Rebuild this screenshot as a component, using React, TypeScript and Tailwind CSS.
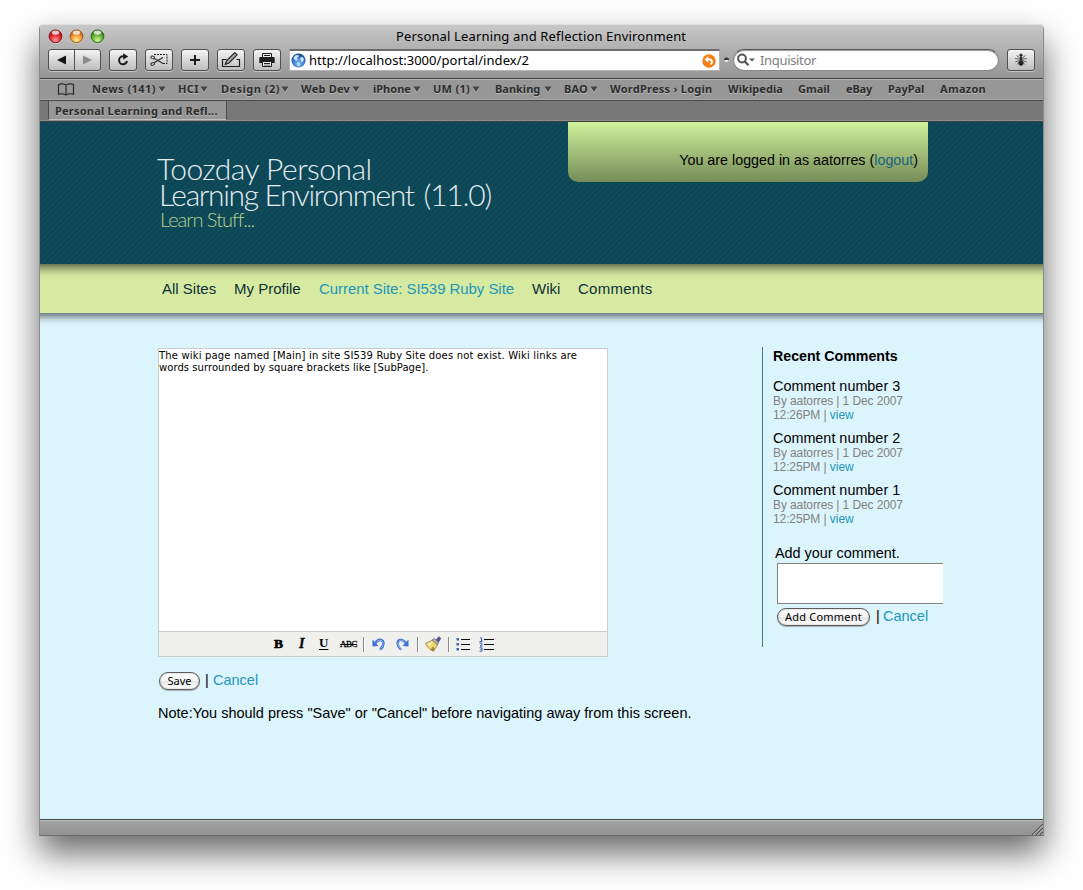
import type { ReactNode } from "react";

const bookmarks = [
  { label: "News (141)", menu: true, cell: "w-[86px]", text: "w-[66px] tracking-[0.46px]" },
  { label: "HCI", menu: true, cell: "w-[43px]", text: "w-[22px] tracking-[0.41px]" },
  { label: "Design (2)", menu: true, cell: "w-[80px]", text: "w-[60px] tracking-[0.48px]" },
  { label: "Web Dev", menu: true, cell: "w-[72px]", text: "w-[51px] tracking-[0.22px]" },
  { label: "iPhone", menu: true, cell: "w-[60px]", text: "w-[40px]" },
  { label: "UM (1)", menu: true, cell: "w-[62px]", text: "w-[39px] tracking-[0.28px]" },
  { label: "Banking", menu: true, cell: "w-[69px]", text: "w-[49px]" },
  { label: "BAO", menu: true, cell: "w-[46px]", text: "w-[26px] tracking-[0.19px]" },
  { label: "WordPress › Login", menu: false, cell: "w-[118px]", text: "tracking-[0.25px]" },
  { label: "Wikipedia", menu: false, cell: "w-[70px]", text: "tracking-[0.07px]" },
  { label: "Gmail", menu: false, cell: "w-[48px]", text: "" },
  { label: "eBay", menu: false, cell: "w-[42px]", text: "tracking-[-0.19px]" },
  { label: "PayPal", menu: false, cell: "w-[52px]", text: "" },
  { label: "Amazon", menu: false, cell: "w-[50px]", text: "tracking-[0.27px]" },
];

const comments = [
  { title: "Comment number 3", time: "12:26PM" },
  { title: "Comment number 2", time: "12:25PM" },
  { title: "Comment number 1", time: "12:25PM" },
];

function Light({ id, edge, mid, glow }: { id: string; edge: string; mid: string; glow: string }) {
  return (
    <svg width="15" height="15" viewBox="0 0 15 15">
      <defs>
        <radialGradient id={id} cx="0.5" cy="0.8" r="0.75">
          <stop offset="0" stopColor={glow} />
          <stop offset="0.5" stopColor={mid} />
          <stop offset="1" stopColor={edge} />
        </radialGradient>
      </defs>
      <circle cx="7.5" cy="8" r="6.9" fill="#d8d8d8" opacity="0.7" />
      <circle cx="7.5" cy="7.3" r="6.4" fill={"url(#" + id + ")"} stroke={edge} strokeWidth="1" />
      <ellipse cx="7.5" cy="3.6" rx="3.7" ry="2.2" fill="#fff" opacity="0.75" />
    </svg>
  );
}

function ToolButton({ children, className = "" }: { children: ReactNode; className?: string }) {
  return (
    <button
      className={
        "flex h-[22px] w-7 items-center justify-center rounded-[3px] border border-[#505050] bg-linear-to-b from-[#f4f4f4] to-[#bdbdbd] shadow-[0_1px_0_#c4c4c4] " +
        className
      }
    >
      {children}
    </button>
  );
}

function Triangle() {
  return (
    <svg className="mt-[2px]" width="8" height="7" viewBox="0 0 8 7">
      <path d="M0.5 1.5h7L4 7z" fill="#c0c0c0" />
      <path d="M0.5 0.5h7L4 6z" fill="#444" />
    </svg>
  );
}

function TitleBar() {
  return (
    <div className="h-[54px] rounded-t-[4px] border-t border-[#dedede] bg-linear-to-b from-[#c8c8c8] to-[#959595]">
      <div className="flex h-6 items-start pl-2">
        <div className="flex w-[348px] gap-[6px] pt-1">
          <Light id="lightRed" edge="#8e1018" mid="#e8303a" glow="#ff9a9a" />
          <Light id="lightAmber" edge="#a5571a" mid="#f5a03c" glow="#ffef9a" />
          <Light id="lightGreen" edge="#2f6b1c" mid="#6fb840" glow="#d6f79a" />
        </div>
        <div className="text-[13px] leading-[22px] tracking-[0.15px]">Personal Learning and Reflection Environment</div>
      </div>
      <div className="flex items-start pl-2">
        <div className="mr-2 flex h-[22px] w-[53px] rounded-[3px] border border-[#505050] bg-linear-to-b from-[#f4f4f4] to-[#bdbdbd] shadow-[0_1px_0_#c4c4c4]">
          <button className="flex w-[26px] items-center justify-center border-r border-[#505050]">
            <svg width="9" height="10" viewBox="0 0 9 10"><path d="M0 5L9 0.5v9z" fill="#151515" /></svg>
          </button>
          <button className="flex flex-1 items-center justify-center">
            <svg width="9" height="10" viewBox="0 0 9 10"><path d="M9 5L0 0.5v9z" fill="#8c8c8c" /></svg>
          </button>
        </div>
        <ToolButton className="mr-2">
          <svg width="14" height="14" viewBox="0 0 14 14">
            <path d="M8.2 3.3H7A4 4 0 1 0 11 8" fill="none" stroke="#1c1c1c" strokeWidth="2" />
            <path d="M7.2 0.2L12.2 3.4L7.2 6.8z" fill="#1c1c1c" />
          </svg>
        </ToolButton>
        <ToolButton className="mr-2">
          <svg width="18" height="14" viewBox="0 0 18 14" fill="none" stroke="#1f1f1f">
            <path d="M4 1.500h13v9h-4" strokeDasharray="2 1" />
            <path d="M4 5.200l9 5.300M4 9.800l9-5.300" strokeWidth="1.300" stroke="#333" />
            <ellipse cx="2.700" cy="4.400" rx="1.900" ry="1.300" transform="rotate(25 2.700 4.400)" stroke="#333" />
            <ellipse cx="2.700" cy="10.900" rx="1.900" ry="1.300" transform="rotate(-25 2.700 10.900)" stroke="#333" />
          </svg>
        </ToolButton>
        <ToolButton className="mr-2">
          <svg width="12" height="12" viewBox="0 0 12 12"><path d="M5 1h2v4h4v2H7v4H5V7H1V5h4z" fill="#1c1c1c" /></svg>
        </ToolButton>
        <ToolButton className="mr-2">
          <svg width="20" height="16" viewBox="0 0 20 16">
            <path d="M5.500 7.500h-4v7h17v-7h-3" fill="none" stroke="#1f1f1f" strokeWidth="1.200" />
            <path d="M13.700 0.600l2.400 2.200-8.200 8.200-3.600 1.400 1.200-3.600z" fill="#aaa" stroke="#1f1f1f" strokeWidth="1.100" />
            <path d="M4.100 12.600l0.600-2 1.500 1.400z" fill="#1f1f1f" />
          </svg>
        </ToolButton>
        <ToolButton className="mr-2">
          <svg width="16" height="16" viewBox="0 0 16 16">
            <path d="M3.500 5V1.500h9V5" fill="#eee" stroke="#1f1f1f" />
            <rect x="5" y="3" width="6" height="1" fill="#1f1f1f" />
            <path d="M1.500 5h13a1.200 1.200 0 0 1 1.200 1.200V11H0.300V6.200A1.200 1.200 0 0 1 1.500 5z" fill="#1f1f1f" />
            <path d="M3.500 9.500h9v5h-9z" fill="#eee" stroke="#1f1f1f" />
            <rect x="5" y="11" width="6" height="1" fill="#1f1f1f" />
            <rect x="5" y="12.700" width="6" height="0.800" fill="#555" />
          </svg>
        </ToolButton>
        <div className="flex h-[22px] w-[431px] items-center border border-t-2 border-[#b5b5b5] border-t-[#6d6d6d] bg-white pl-[1px] pr-[3px]">
          <svg width="15" height="15" viewBox="0 0 15 15">
            <defs>
              <radialGradient id="globe" cx="0.5" cy="0.7" r="0.7">
                <stop offset="0" stopColor="#8cc6f5" />
                <stop offset="0.5" stopColor="#3d83d6" />
                <stop offset="1" stopColor="#123f86" />
              </radialGradient>
            </defs>
            <circle cx="7.500" cy="7.500" r="7" fill="url(#globe)" />
            <path d="M2.500 4.200l2.500-2.200 3 0.300-0.500 1.700-1.800 1 1.200 1.300-1.500 1.500-2.200-1.200zM9 5l2.500-1.200 1.500 2.200-1 2.500-1.200 1-1-2.200zM6.500 9.500l2.500 1-0.700 2.800-2-1z" fill="#d9eefc" opacity="0.9" />
          </svg>
          <span className="ml-[3px] flex-1 text-[13px] leading-[19px] tracking-[0.04px]">http://localhost:3000/portal/index/2</span>
          <svg width="14" height="14" viewBox="0 0 14 14">
            <circle cx="7" cy="7" r="6.700" fill="#f77f14" />
            <path d="M5 5.500h2.500a2.300 2.300 0 0 1 1.300 4.300" fill="none" stroke="#fff" strokeWidth="1.900" strokeLinecap="round" />
            <path d="M6.300 2.200v6.600L2.500 5.500z" fill="#fff" />
          </svg>
        </div>
        <div className="flex h-[22px] w-[13px] items-center justify-center">
          <svg width="5" height="6" viewBox="0 0 5 6">
            <path d="M0 3a2.500 2.500 0 0 1 5 0z" fill="#333" />
            <path d="M0.500 3h4a2 2 0 0 1-4 0z" fill="#eee" />
          </svg>
        </div>
        <div className="mr-2 flex h-[22px] w-[266px] items-center rounded-full border border-[#8a8a8a] border-t-[#555] bg-white pl-[3px] shadow-[inset_0_1px_1px_#999]">
          <svg width="19" height="14" viewBox="0 0 19 14">
            <circle cx="5" cy="5.500" r="3.900" fill="none" stroke="#555" strokeWidth="2" />
            <path d="M7.800 8.500l3.700 3.700" stroke="#555" strokeWidth="2.300" />
            <path d="M12 5.500h6l-3 3z" fill="#555" />
          </svg>
          <span className="ml-[4px] text-[13px] leading-[19px] tracking-[-0.33px] text-[#808080]">Inquisitor</span>
        </div>
        <ToolButton>
          <svg width="14" height="14" viewBox="0 0 14 14" fill="#222" stroke="#333" strokeWidth="0.700">
            <path d="M7 6L2.500 2.500M7 6.300L1 5.500M7 6.800L1.300 9M7 7.500L3 11.500M7 6l4.500-3.500M7 6.300l6-0.800M7 6.800l5.700 2.200M7 7.500l4 4" fill="none" />
            <circle cx="7" cy="2.200" r="1.300" />
            <ellipse cx="7" cy="5.500" rx="1.200" ry="1.700" stroke="none" />
            <ellipse cx="7" cy="10" rx="2.300" ry="2.500" />
          </svg>
        </ToolButton>
      </div>
    </div>
  );
}

function BookmarksBar() {
  return (
    <div className="flex h-[23px] items-start border-y border-b-[#484848] border-t-[#404040] bg-[#979797] pl-[17px] shadow-[inset_0_1px_0_#b4b4b4,inset_0_-1px_0_#a8a8a8]">
      <svg className="mr-[17px] mt-1" width="18" height="13" viewBox="0 0 18 13" fill="none" stroke="#2c2c2c" strokeWidth="1.200">
        <path d="M9 2.200C7.500 0.600 3.500 0.600 1.500 1.500v9.800c2-0.800 6-0.800 7.500 0.700 1.500-1.500 5.500-1.500 7.500-0.700V1.500C14.500 0.600 10.500 0.600 9 2.200zM9 2.200V12" />
      </svg>
      {bookmarks.map((b) => (
        <div key={b.label} className={"flex items-center " + b.cell}>
          <span className={"shrink-0 whitespace-nowrap text-[11px] font-bold leading-[19px] text-[#2c2c2c] [text-shadow:0_1px_0_#b8b8b8] " + b.text}>
            {b.label}
          </span>
          {b.menu && <Triangle />}
        </div>
      ))}
    </div>
  );
}

function TabBar() {
  return (
    <div className="flex h-[21px] items-start border-b border-[#3c3c3c] bg-[#787878] pl-2 shadow-[inset_0_-1px_0_#8f8f8f]">
      <div className="h-[19px] w-[179px] rounded-b-[2px] border border-t-0 border-[#4c4c4c] border-b-[#c0c0c0] bg-[#979797] pl-[6px] text-[11px] font-bold leading-5 tracking-[0.22px] text-[#2c2c2c] [text-shadow:0_1px_0_#b8b8b8]">
        Personal Learning and Refl...
      </div>
    </div>
  );
}

function SiteHeader() {
  return (
    <header className="flex h-[142px] bg-[#0d4859] bg-[repeating-linear-gradient(135deg,#0c4758_0px,#0c4758_2.800px,#184f5b_3.500px,#0c4758_4.243px)] pl-[118px]">
      <div className="w-[410px] pt-[34px]">
        <h1 className="font-['Lato',sans-serif] text-[30px] font-light leading-[25.500px] text-[#e3edf0]">
          <span className="-ml-px block h-[25.500px] tracking-[-0.500px]">Toozday Personal</span>
          <span className="block h-[25.500px] pl-[1px] tracking-[-1.360px]">
            Learning Environment
            <span className="ml-[10px] tracking-[-1.200px]">(11.0)</span>
          </span>
        </h1>
        <p className="pl-[2px] font-['Lato',sans-serif] text-[20px] font-light leading-6 tracking-[-0.980px] text-[#b9d08c]">Learn Stuff...</p>
      </div>
      <div className="h-[60px] w-[360px] rounded-b-[10px] bg-linear-to-b from-[#d2f39c] to-[#758c58] pr-[10px] pt-[28px] text-right font-['Liberation_Sans',sans-serif] text-[14.300px] leading-5">
        You are logged in as aatorres (<a className="text-[#1c617f]">logout</a>)
      </div>
    </header>
  );
}

function SiteNav() {
  return (
    <nav className="flex h-[49px] bg-[#d6eba1] bg-[linear-gradient(to_bottom,#6b7652_0px,#98a776_4px,#bdcf90_8px,#d0e49d_12px,#d6eba1_16px)] pl-[122px] pt-[15px] font-['Liberation_Sans',sans-serif] text-[15px] leading-5 text-[#0f303b]">
      <a className="w-[72px]">All Sites</a>
      <a className="w-[85px]">My Profile</a>
      <a className="w-[213px] tracking-[-0.060px] text-[#2396bb]">Current Site: SI539 Ruby Site</a>
      <a className="w-[46px]">Wiki</a>
      <a className="tracking-[0.250px]">Comments</a>
    </nav>
  );
}

function AquaButton({ children, className }: { children: ReactNode; className: string }) {
  return (
    <button
      className={
        "h-[18px] whitespace-nowrap rounded-full border border-[#5c5c5c] bg-[linear-gradient(to_bottom,#ffffff_0%,#f6f6f6_48%,#e8e8e8_52%,#ffffff_100%)] text-center font-['Noto_Sans',sans-serif] text-[11px] leading-4 shadow-[inset_0_0_2px_#aaa,0_1px_1px_#9fb0b6] " +
        className
      }
    >
      {children}
    </button>
  );
}

function Separator({ className }: { className: string }) {
  return <div className={"h-[15px] w-[2px] border-l border-[#888] bg-white " + className} />;
}

function EditorToolbar() {
  return (
    <div className="flex h-[25px] items-center border-t border-[#ccc] bg-[#f0f0ee] pl-[114px]">
      <span className="w-[24px] pl-[1px] font-['Liberation_Serif',serif] text-[13.500px] font-bold leading-6 [-webkit-text-stroke:0.600px_#000]">B</span>
      <span className="w-[22px] pl-[2px] font-['Liberation_Serif',serif] text-[14px] font-bold italic leading-6 [-webkit-text-stroke:0.300px_#000]">I</span>
      <span className="-mt-[2px] w-[21px] font-['Liberation_Serif',serif] text-[13px] font-bold leading-6 underline decoration-1 underline-offset-2">U</span>
      <span className="w-[23px] font-['Liberation_Serif',serif] text-[9px] leading-6 tracking-[-0.500px] line-through [-webkit-text-stroke:0.300px_#000]">ABC</span>
      <Separator className="mr-[7px]" />
      <svg className="mr-[11px]" width="13" height="13" viewBox="0 0 13 13">
        <path d="M2.500 6C4.500 3 7 1.500 9 2c3.500 1 3 6.500-1 9.500" fill="none" stroke="#3f72d0" strokeWidth="2.600" />
        <path d="M3 5.500C5 3 7 1.800 9 2.300c3 0.900 2.500 5.700-0.800 8.700" fill="none" stroke="#8fb4f2" strokeWidth="1" />
        <path d="M0.500 1.500l6 6.500-6 0.500z" fill="#3d72d4" />
      </svg>
      <svg className="mr-[8px]" width="13" height="13" viewBox="0 0 13 13">
        <path d="M10.500 6C8.500 3 6 1.500 4 2c-3.500 1-3 6.500 1 9.500" fill="none" stroke="#3f72d0" strokeWidth="2.400" />
        <path d="M10 5.500C8 3 6 1.800 4 2.300c-3 0.900-2.500 5.700 0.800 8.700" fill="none" stroke="#8fb4f2" strokeWidth="1" />
        <path d="M12.500 1.500l-6 6.500 6 0.500z" fill="#3d72d4" />
      </svg>
      <Separator className="mr-[6px]" />
      <svg className="mr-[7px]" width="16" height="16" viewBox="0 0 16 16">
        <path d="M11.200 3.800l2.600-3 2 1.400-2.400 4z" fill="#54509c" stroke="#35306e" strokeWidth="0.600" />
        <path d="M7 4l2.200-1.500 4.300 3.800L12.500 9z" fill="#b4b4bc" stroke="#5b5b66" strokeWidth="0.700" />
        <path d="M0.500 7.500L7 4.200 12.400 9 8.500 15.300C5 14 2 11 0.500 7.500z" fill="#f0d878" stroke="#8b7430" strokeWidth="0.700" />
        <path d="M2.500 8L7.500 6l-3 4z" fill="#fff6c8" />
        <path d="M8 10.500l1.800 2.500-1.300 2.300-3-1.700z" fill="#a8842c" />
      </svg>
      <Separator className="mr-[6px]" />
      <svg className="mr-[9px]" width="14" height="14" viewBox="0 0 14 14">
        <path d="M0.500 1h2.500v2.500H0.500zM0.500 6h2.500v2.500H0.500zM0.500 11h2.500v2.500H0.500z" fill="#3f62a8" />
        <path d="M5 2h9v1H5zM5 7h9v1H5zM5 12h9v1H5z" fill="#111" />
      </svg>
      <svg width="15" height="15" viewBox="0 0 15 15">
        <path d="M1 1h1.500v3.500M0.500 4.500h3M0.500 6.200h2.500v1.400l-2 1.400h2.500M0.500 10.800h2.500v3.400H0.500M1.500 12.400h1.500" fill="none" stroke="#3f62b8" strokeWidth="1" />
        <path d="M5 2h10v1H5zM5 7h10v1H5zM5 12h10v1H5z" fill="#111" />
      </svg>
    </div>
  );
}

function Editor() {
  return (
    <section className="w-[604px]">
      <div className="flex h-[309px] w-[450px] flex-col border border-[#ccc] bg-white">
        <div className="flex-1 whitespace-nowrap pt-px font-['DejaVu_Sans',sans-serif] text-[10px] leading-3">
          <div className="tracking-[0.170px]">The wiki page named [Main] in site SI539 Ruby Site does not exist. Wiki links are</div>
          <div className="tracking-[0.060px]">words surrounded by square brackets like [SubPage].</div>
        </div>
        <EditorToolbar />
      </div>
      <div className="mt-[15px] flex items-start pl-[1px] text-[14.500px] leading-[18px]">
        <AquaButton className="w-[41px]">Save</AquaButton>
        <span className="-mt-px ml-[5px] w-[8px]">|</span>
        <a className="-mt-px text-[#2396bb]">Cancel</a>
      </div>
      <p className="mt-[13px] text-[14.500px] leading-5">
        Note:You should press "Save" or "Cancel" before navigating away from this screen.
      </p>
    </section>
  );
}

function Sidebar() {
  return (
    <aside className="-mt-px h-[300px] w-[182px] border-l border-[#3c7a97] pl-[10px] text-[14.400px]">
      <h2 className="mb-[12px] text-[14.200px] font-bold leading-[18px]">Recent Comments</h2>
      {comments.map((c) => (
        <div key={c.title} className="mb-[7px]">
          <div className="h-[17px] leading-[18px]">{c.title}</div>
          <div className="text-[12px] leading-[14px] tracking-[-0.110px] text-[#828282]">
            By aatorres | 1 Dec 2007
            <br />
            <span>{c.time} | </span>
            <a className="tracking-normal text-[#2396bb]">view</a>
          </div>
        </div>
      ))}
      <div className="pl-[2px] pt-[11px]">
        <label className="block h-[19px] leading-[18px]">Add your comment.</label>
        <div className="ml-[2px] h-[41px] w-[166px] border border-r-0 border-[#838383] bg-white" />
        <div className="mt-[4px] flex items-start pl-[2px] text-[14.500px] leading-[18px]">
          <AquaButton className="w-[93px] tracking-[0.220px]">Add Comment</AquaButton>
          <span className="-mt-px ml-[6px] w-[7px]">|</span>
          <a className="-mt-px text-[#2396bb]">Cancel</a>
        </div>
      </div>
    </aside>
  );
}

export default function App() {
  return (
    <div className="h-[890px] w-[1083px] overflow-hidden bg-white pl-[39px] pt-6 font-['Noto_Sans',sans-serif] text-black">
      <div className="flex h-[812px] w-[1005px] flex-col rounded-t-[5px] border-x border-b border-[#8a8a8a] border-b-[#6c6c6c] shadow-[0_17px_34px_rgba(0,0,0,0.6)]">
        <TitleBar />
        <BookmarksBar />
        <TabBar />
        <SiteHeader />
        <SiteNav />
        <main className="flex flex-1 bg-[#dcf4fc] bg-[linear-gradient(to_bottom,#6f8086_0px,#94a5ab_3px,#bbcfd6_6px,#d2e8f0_9px,#dcf4fc_12px)] pl-[118px] pt-[35px] font-['Liberation_Sans',sans-serif]">
          <Editor />
          <Sidebar />
        </main>
        <footer className="flex h-4 items-end justify-end border-t border-[#404848] bg-linear-to-b from-[#a4a4a4] to-[#929292] shadow-[inset_0_1px_0_#bcbcbc]">
          <svg width="12" height="12" viewBox="0 0 12 12" strokeWidth="1.200">
            <path d="M1 12L12 1M5 12l7-7M9 12l3-3" stroke="#555" />
            <path d="M2.200 12L12 2.200M6.200 12L12 6.200M10.200 12l1.800-1.800" stroke="#d0d0d0" strokeWidth="0.700" />
          </svg>
        </footer>
      </div>
    </div>
  );
}
